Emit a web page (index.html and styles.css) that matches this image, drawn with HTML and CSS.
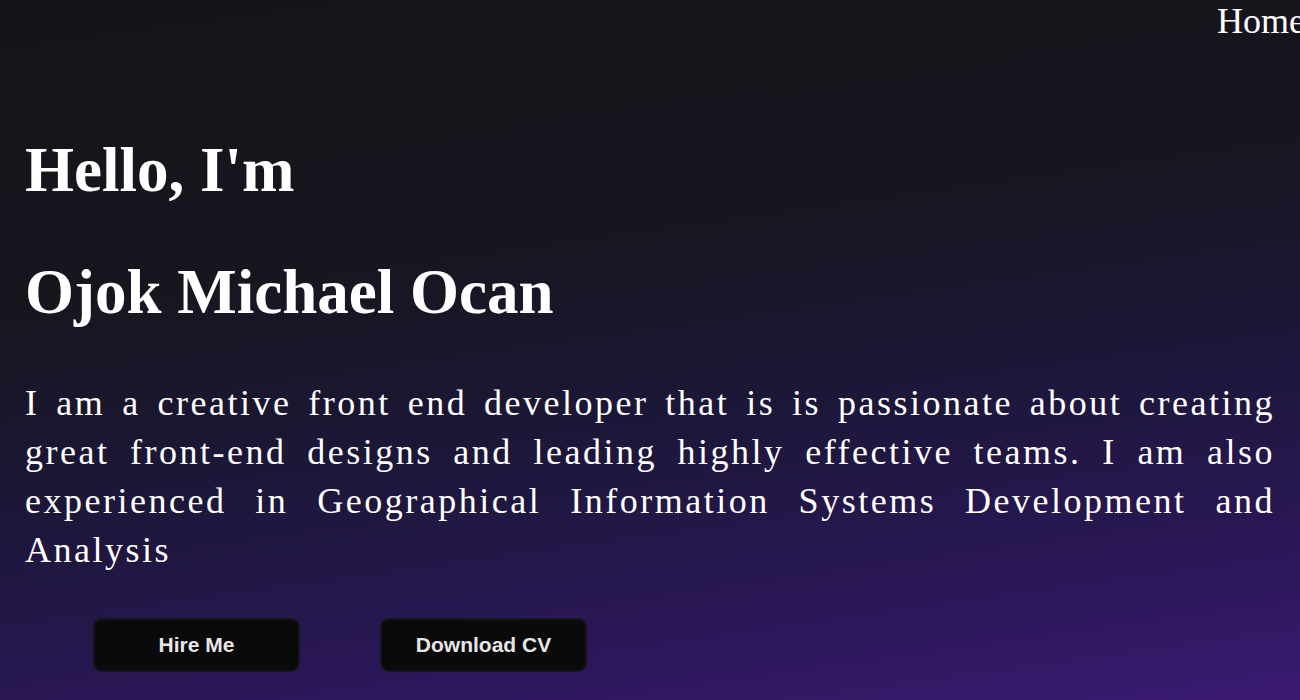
FILE: index.html
```html
<!DOCTYPE html>
<html lang="en">
  <head>
    <meta charset="utf-8" />
    <meta name="viewport" content="width=device-width, initial-scale=1.0" />
    <title>Ojok Michael Ocan</title>
    <link rel="stylesheet" href="styles.css">
  </head>

  <body>
    <header>
      <nav>
        <ul class="navLinks">
          <li><a href="#">Home</a></li>
        </ul>
      </nav>
    </header>

    <main class="hero">
      <h1>Hello, I'm</h1>
      <h1>Ojok Michael Ocan</h1>
      <p class="intro">
        I am a creative front end developer that is is passionate about creating great front-end designs and leading highly effective teams. I am also experienced in Geographical Information Systems Development and Analysis
      </p>

      <div class="actions">
        <button>Hire Me</button>
        <button>Download CV</button>
      </div>
    </main>
  </body>
</html>
```

FILE: styles.css
```css
html,
body {
  height: 100%;
  width: 100%;
}

body {
  margin: 0;
  overflow: hidden;
  color: #ffffff;
  font-family: 'Liberation Serif', serif;
  background: linear-gradient(172deg, #141419 0%, #17161f 35%, #1c1738 58%, #2a1757 82%, #3a1a72 100%);
}

header {
  display: flex;
  justify-content: flex-end;
}

.navLinks {
  display: flex;
  list-style: none;
  margin: 0 -5px 0 0;
  padding: 0;
}

.navLinks a {
  color: #ffffff;
  text-decoration: none;
  font-size: 36px;
}

.hero {
  padding: 0 25px;
}

h1 {
  font-size: 63px;
  font-weight: 700;
  margin: 92px 0 0;
}

h1 + h1 {
  margin-top: 49px;
}

.intro {
  font-size: 36px;
  line-height: 49px;
  letter-spacing: 2.5px;
  word-spacing: 5px;
  text-align: justify;
  margin: 50px 0 0;
}

.actions {
  display: flex;
  gap: 80px;
  margin: 43px 0 0 68px;
}

button {
  width: 207px;
  height: 54px;
  background-color: #0a0a0a;
  color: #e6e6e6;
  border: 2px solid #16161a;
  border-radius: 9px;
  font-family: 'Liberation Sans', sans-serif;
  font-weight: 700;
  font-size: 21px;
}
```
